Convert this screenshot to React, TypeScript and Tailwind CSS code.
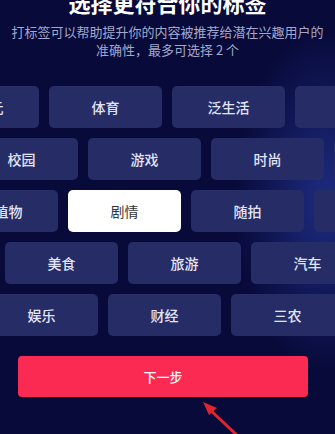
const rows: { offset: string; tags: string[] }[] = [
  { offset: "ml-[-74px]", tags: ["二次元", "体育", "泛生活", "文化"] },
  { offset: "ml-[-35px]", tags: ["校园", "游戏", "时尚", "科技"] },
  { offset: "ml-[-55px]", tags: ["动植物", "剧情", "随拍", "萌宠"] },
  { offset: "ml-[-118px]", tags: ["音乐", "美食", "旅游", "汽车"] },
  { offset: "ml-[-15px]", tags: ["娱乐", "财经", "三农"] },
];

const selected = "剧情";

export default function App() {
  return (
    <div
      className="relative h-[434px] w-full overflow-hidden bg-[#080a3a] bg-[radial-gradient(ellipse_90px_170px_at_325px_200px,#1d2c80_0%,rgba(8,10,58,0)_100%)]"
      style={{ fontFamily: '"Noto Sans CJK SC", "Noto Sans", sans-serif' }}
    >
      <h1 className="mt-[-12px] text-center text-[22px] leading-[28px] font-bold text-white">
        选择更符合你的标签
      </h1>
      <p className="mt-[7px] px-1 text-center text-[13px] leading-[18px] text-[#a3a8cc]">
        打标签可以帮助提升你的内容被推荐给潜在兴趣用户的
        <br />
        准确性，最多可选择 2 个
      </p>

      <div className="mt-[27px] flex flex-col gap-[10px]">
        {rows.map((row, i) => (
          <div key={i} className={`flex gap-[10px] ${row.offset}`}>
            {row.tags.map((t) => (
              <div
                key={t}
                className={
                  t === selected
                    ? "flex h-[42px] w-[113px] shrink-0 items-center justify-center rounded-[5px] bg-white text-[14px] text-[#333333]"
                    : "flex h-[42px] w-[113px] shrink-0 items-center justify-center rounded-[5px] bg-[#252c66] text-[14px] font-medium text-[#e2e5f7]"
                }
              >
                {t}
              </div>
            ))}
          </div>
        ))}
      </div>

      <button className="mt-[20px] ml-[18px] flex h-[41px] w-[290px] items-center justify-center rounded-[4px] bg-[#fb2a52] text-[13px] font-medium text-white">
        下一步
      </button>

      <svg className="absolute left-[196px] top-[398px]" width="60" height="40" viewBox="0 0 60 40">
        <line x1="12" y1="10" x2="44" y2="40" stroke="#e0242e" strokeWidth="3" />
        <polygon points="7,4 21,10 13,17" fill="#e0242e" />
      </svg>
    </div>
  );
}
